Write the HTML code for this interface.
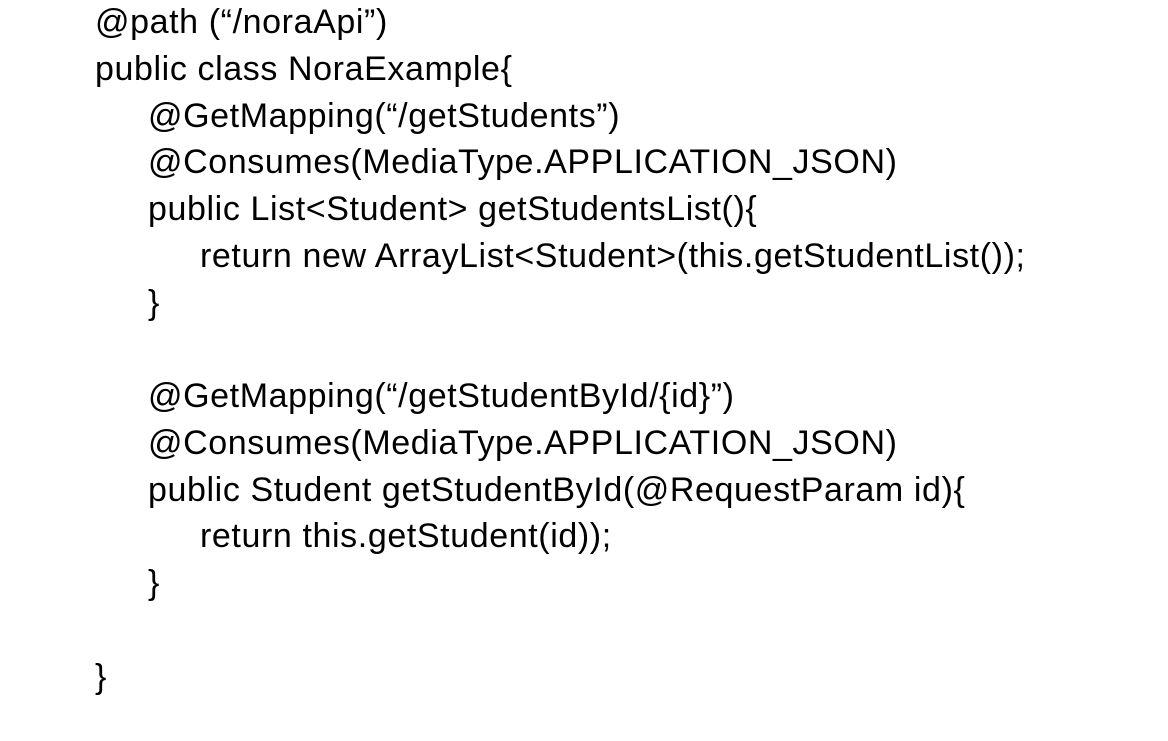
<!DOCTYPE html>
<html><head><meta charset="utf-8"><style>
html,body{margin:0;padding:0;background:#fff;width:1168px;height:741px;overflow:hidden}
.c{position:absolute;left:0;top:-1px;font-family:"Liberation Sans",sans-serif;font-size:34px;line-height:46.75px;color:#000;letter-spacing:0.6px}
.l{height:46.75px;white-space:pre}
.i0{padding-left:95px}.i1{padding-left:148px}.i2{padding-left:200px}
</style></head><body><div class="c"><div class="l i0">@path (“/noraApi”)</div><div class="l i0">public class NoraExample{</div><div class="l i1">@GetMapping(“/getStudents”)</div><div class="l i1">@Consumes(MediaType.APPLICATION_JSON)</div><div class="l i1">public List&lt;Student&gt; getStudentsList(){</div><div class="l i2">return new ArrayList&lt;Student&gt;(this.getStudentList());</div><div class="l i1">}</div><div class="l"></div><div class="l i1">@GetMapping(“/getStudentById/{id}”)</div><div class="l i1">@Consumes(MediaType.APPLICATION_JSON)</div><div class="l i1">public Student getStudentById(@RequestParam id){</div><div class="l i2">return this.getStudent(id));</div><div class="l i1">}</div><div class="l"></div><div class="l i0">}</div></div></body></html>
